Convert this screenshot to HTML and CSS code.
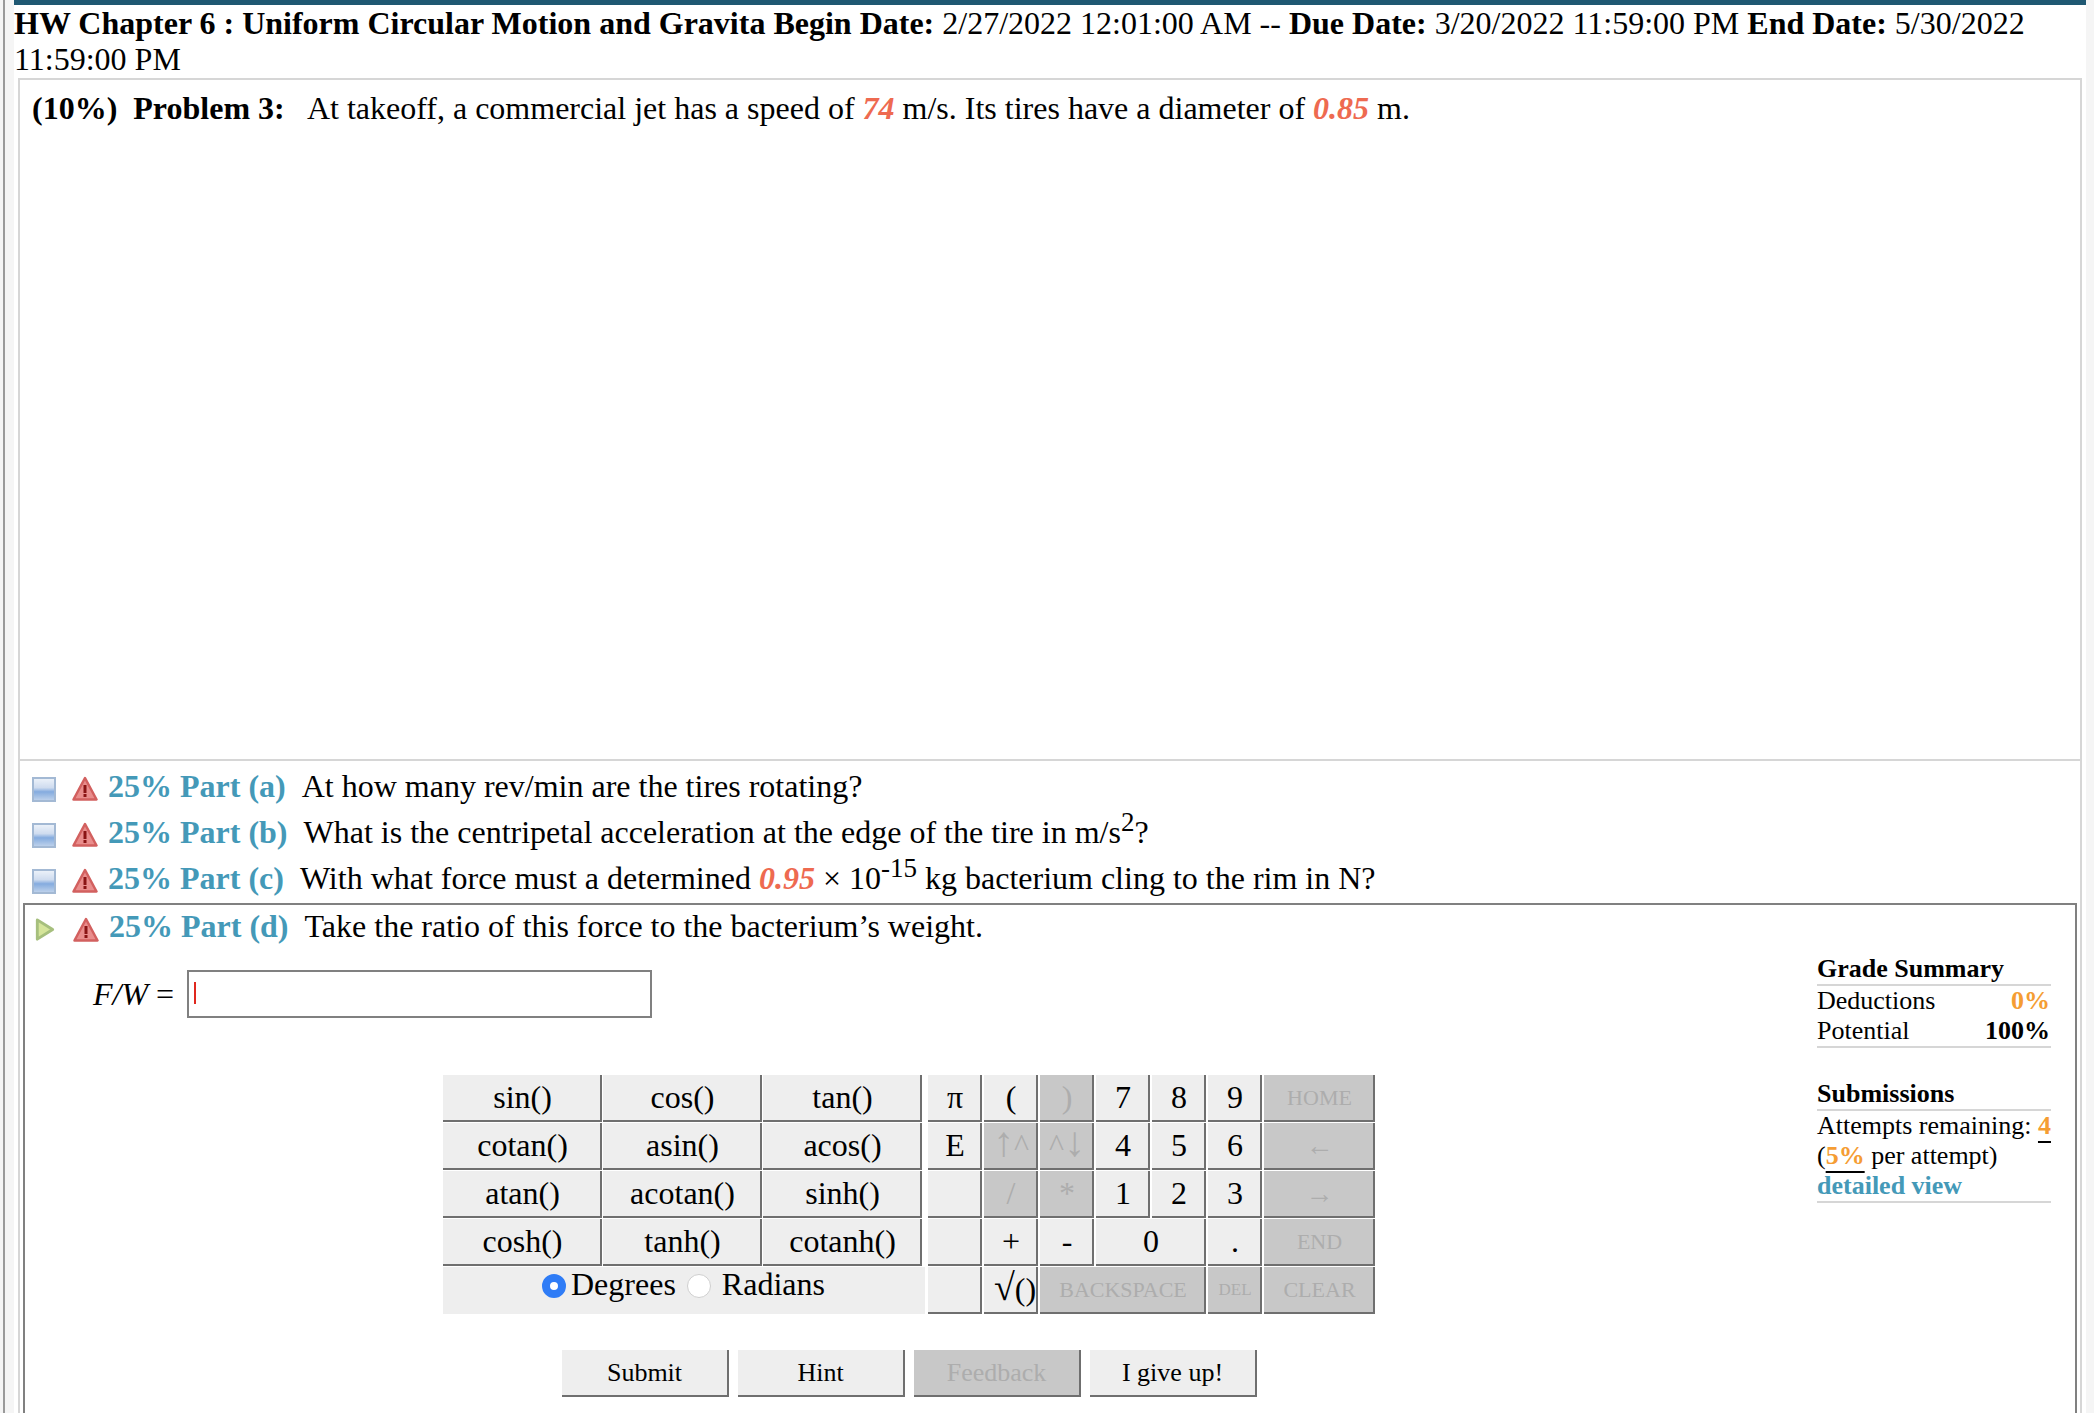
FILE: index.html
```html
<!DOCTYPE html>
<html lang="en">
<head>
  <meta charset="UTF-8" />
  <meta name="viewport" content="width=device-width, initial-scale=1.0" />
  <title>HW Chapter 6</title>
  <link rel="stylesheet" href="styles.css">
</head>
<body>
  <svg class="icon-defs" width="0" height="0">
    <defs>
      <linearGradient id="minus-fill" x1="0" y1="0" x2="0" y2="1">
        <stop offset="0" stop-color="#eef3fa"/>
        <stop offset="0.42" stop-color="#cfdcef"/>
        <stop offset="0.6" stop-color="#84abdf"/>
        <stop offset="1" stop-color="#c3d5ec"/>
      </linearGradient>
    </defs>
    <symbol id="icon-warn" viewBox="0 0 26 26">
      <path d="M13 2 L24.5 23.5 H1.5 Z" fill="#e98d8c" stroke="#d2605f" stroke-width="2.5" stroke-linejoin="round"/>
      <rect x="11.5" y="9" width="3" height="8" fill="#8a1414"/>
      <rect x="11.5" y="18" width="3" height="3" fill="#8a1414"/>
    </symbol>
    <symbol id="icon-minus" viewBox="0 0 24 25">
      <rect x="1" y="1" width="22" height="23" fill="url(#minus-fill)" stroke="#a3b9d4" stroke-width="2"/>
    </symbol>
    <symbol id="icon-play" viewBox="0 0 22 26">
      <path d="M3 3 L19 13 L3 23 Z" fill="#d5e59a" stroke="#a6bf7d" stroke-width="3" stroke-linejoin="round"/>
    </symbol>
  </svg>

  <div class="page">
    <div class="content">
      <header class="hw-title">
        <b>HW Chapter 6 : Uniform Circular Motion and Gravita</b> <b>Begin Date:</b> 2/27/2022 12:01:00 AM -- <b>Due Date:</b> 3/20/2022 11:59:00 PM <b>End Date:</b> 5/30/2022<br>11:59:00 PM
      </header>

      <div class="outer">
        <section class="problem">
          <b>(10%)&nbsp; Problem 3:</b>&nbsp;&nbsp; At takeoff, a commercial jet has a speed of <i class="given">74</i> m/s. Its tires have a diameter of <i class="given">0.85</i> m.
        </section>

        <div class="part-row">
          <svg class="icon"><use href="#icon-minus"/></svg>
          <svg class="icon warn"><use href="#icon-warn"/></svg>
          <b class="part-label">25% Part (a)</b>
          <span>At how many rev/min are the tires rotating?</span>
        </div>
        <div class="part-row">
          <svg class="icon"><use href="#icon-minus"/></svg>
          <svg class="icon warn"><use href="#icon-warn"/></svg>
          <b class="part-label">25% Part (b)</b>
          <span>What is the centripetal acceleration at the edge of the tire in m/s<sup>2</sup>?</span>
        </div>
        <div class="part-row">
          <svg class="icon"><use href="#icon-minus"/></svg>
          <svg class="icon warn"><use href="#icon-warn"/></svg>
          <b class="part-label">25% Part (c)</b>
          <span>With what force must a determined <i class="given">0.95</i> &times; 10<sup>-15</sup> kg bacterium cling to the rim in N?</span>
        </div>

        <section class="part-open">
          <div class="part-row">
            <svg class="icon play"><use href="#icon-play"/></svg>
            <svg class="icon warn"><use href="#icon-warn"/></svg>
            <b class="part-label">25% Part (d)</b>
            <span>Take the ratio of this force to the bacterium&rsquo;s weight.</span>
          </div>

          <div class="answer-area">
            <div class="answer-main">
              <div class="answer-line">
                <span class="answer-name"><i>F/W</i> =</span>
                <div class="answer-box"><span class="caret"></span></div>
              </div>

              <div class="keypad">
                <div class="keys-left">
                  <button class="key">sin()</button>
                  <button class="key">cos()</button>
                  <button class="key">tan()</button>
                  <button class="key">cotan()</button>
                  <button class="key">asin()</button>
                  <button class="key">acos()</button>
                  <button class="key">atan()</button>
                  <button class="key">acotan()</button>
                  <button class="key">sinh()</button>
                  <button class="key">cosh()</button>
                  <button class="key">tanh()</button>
                  <button class="key">cotanh()</button>
                  <div class="angle-mode">
                    <input type="radio" name="mode" checked> <label>Degrees</label>
                    <input type="radio" name="mode"> <label class="rad">Radians</label>
                  </div>
                </div>
                <div class="keys-right">
                  <button class="key">&pi;</button>
                  <button class="key">(</button>
                  <button class="key off">)</button>
                  <button class="key">7</button>
                  <button class="key">8</button>
                  <button class="key">9</button>
                  <button class="key off small">HOME</button>
                  <button class="key">E</button>
                  <button class="key off"><span class="tall">&uarr;</span>^</button>
                  <button class="key off">^<span class="tall">&darr;</span></button>
                  <button class="key">4</button>
                  <button class="key">5</button>
                  <button class="key">6</button>
                  <button class="key off arrow">&larr;</button>
                  <button class="key"></button>
                  <button class="key off">/</button>
                  <button class="key off">*</button>
                  <button class="key">1</button>
                  <button class="key">2</button>
                  <button class="key">3</button>
                  <button class="key off arrow">&rarr;</button>
                  <button class="key"></button>
                  <button class="key">+</button>
                  <button class="key">-</button>
                  <button class="key wide-2">0</button>
                  <button class="key">.</button>
                  <button class="key off small">END</button>
                  <button class="key"></button>
                  <button class="key root-key"><span class="root">&radic;</span>()</button>
                  <button class="key off small wide-3">BACKSPACE</button>
                  <button class="key off tiny">DEL</button>
                  <button class="key off small">CLEAR</button>
                </div>
              </div>

              <div class="actions">
                <button class="action">Submit</button>
                <button class="action">Hint</button>
                <button class="action off">Feedback</button>
                <button class="action">I give up!</button>
              </div>
            </div>

            <aside class="summary">
              <h4>Grade Summary</h4>
              <div class="summary-list">
                <div class="summary-row"><span>Deductions</span><b class="orange">0%</b></div>
                <div class="summary-row"><span>Potential</span><b>100%</b></div>
              </div>
              <h4 class="second">Submissions</h4>
              <div class="summary-list">
                Attempts remaining: <b class="orange count">4</b><br>
                (<b class="orange count">5%</b> per attempt)<br>
                <a class="detail-link" href="#">detailed view</a>
              </div>
            </aside>
          </div>
        </section>
      </div>
    </div>
  </div>
</body>
</html>
```

FILE: styles.css
```css
:root {
  --teal: #4499b8;
  --given: #ee6a50;
  --orange: #f59d33;
  --key-bg: #eeeeee;
  --key-off: #c8c8c8;
  --key-edge: #6f6f6f;
  --rule: #d6d6d6;
}

* {
  box-sizing: border-box;
}

html, body {
  margin: 0;
  height: 100%;
  overflow: hidden;
}

body {
  background: #f5f5f5;
  color: #000;
  font-family: "Liberation Serif", "Times New Roman", serif;
  font-size: 32px;
}

.icon-defs {
  position: absolute;
}

.page {
  height: 1413px;
  margin-left: 3px;
  padding: 0 8px 0 9px;
  border-left: 2px solid #9a9a9a;
  overflow: hidden;
}

.content {
  height: 100%;
  background: #fff;
  padding-right: 4px;
}

.hw-title {
  border-top: 5px solid #1f5872;
  margin-right: -4px;
  line-height: 36px;
}

.outer {
  margin: 1px 0 0 4px;
  height: 1340px;
  border: solid var(--rule);
  border-width: 2px 2px 0;
}

.problem {
  height: 681px;
  border-bottom: 2px solid var(--rule);
  padding: 10px 12px;
  line-height: 36px;
}

.given {
  color: var(--given);
  font-weight: bold;
}

.part-row {
  display: flex;
  align-items: center;
  height: 46px;
  padding-left: 12px;
  white-space: pre;
}

.problem + .part-row {
  margin-top: 2px;
}

.icon {
  width: 24px;
  height: 25px;
  margin-top: 6px;
  flex: none;
  filter: blur(0.6px);
}

.icon.warn {
  width: 26px;
  height: 26px;
  margin-left: 16px;
  margin-right: 10px;
}

.part-label {
  color: var(--teal);
  margin-right: 16px;
}

sup {
  line-height: 0;
  font-size: 27px;
}

.part-open {
  margin: 2px 3px 0;
  height: 600px;
  border: 2px solid #808080;
}

.part-open .part-row {
  height: 43px;
  padding-left: 8px;
}

.answer-area {
  display: flex;
  justify-content: space-between;
}

.answer-main {
  padding-top: 22px;
}

.answer-line {
  display: flex;
  align-items: center;
  gap: 13px;
  padding-left: 68px;
}

.answer-box {
  width: 465px;
  height: 48px;
  border: 2px solid #808080;
  padding: 10px 5px;
}

.caret {
  display: block;
  width: 2px;
  height: 22px;
  background: #e0281e;
}

.keypad {
  display: flex;
  gap: 6px;
  margin: 57px 0 0 418px;
}

.keys-left {
  display: grid;
  grid-template-columns: repeat(3, 159px);
  grid-auto-rows: 47px;
  gap: 1px;
}

.keys-right {
  display: grid;
  grid-template-columns: repeat(6, 54px) 111px;
  grid-auto-rows: 47px;
  column-gap: 2px;
  row-gap: 1px;
}

.key {
  margin: 0;
  padding: 0 0 0 2px;
  font-family: inherit;
  font-size: 32px;
  color: #000;
  background: var(--key-bg);
  border: none;
  border-right: 2px solid var(--key-edge);
  border-bottom: 2px solid var(--key-edge);
  white-space: nowrap;
}

.key.off {
  background: var(--key-off);
  color: #adadad;
}

.key.small {
  font-size: 22px;
}

.key.tiny {
  font-size: 17px;
}

.key.arrow {
  font-size: 28px;
}

.key.root-key {
  padding-left: 10px;
}

.tall {
  font-size: 42px;
  line-height: 0;
}

.root {
  font-size: 38px;
  line-height: 0;
}

.wide-2 {
  grid-column: span 2;
}

.wide-3 {
  grid-column: span 3;
}

.angle-mode {
  grid-column: span 3;
  display: flex;
  align-items: flex-start;
  background: var(--key-bg);
  font-size: 32px;
  line-height: 34px;
  margin-right: -3px;
  padding-left: 99px;
}

.angle-mode input {
  appearance: none;
  width: 24px;
  height: 24px;
  margin: 7px 5px 0 0;
  border-radius: 50%;
  background: #fff;
  border: 1px solid #cfcfcf;
}

.angle-mode input:checked {
  border: 8px solid #2f7cf6;
}

.angle-mode label + input {
  margin-left: 11px;
}

.angle-mode .rad {
  margin-left: 6px;
}

.actions {
  display: flex;
  gap: 9px;
  margin: 36px 0 0 537px;
}

.action {
  width: 167px;
  height: 47px;
  padding: 0;
  font-family: inherit;
  font-size: 26px;
  color: #000;
  background: var(--key-bg);
  border: none;
  border-right: 2px solid var(--key-edge);
  border-bottom: 2px solid var(--key-edge);
}

.action.off {
  background: var(--key-off);
  color: #adadad;
}

.summary {
  width: 234px;
  margin: 6px 24px 0 0;
  font-size: 26px;
  line-height: 30px;
}

.summary h4 {
  margin: 0;
  font-size: 26px;
  border-bottom: 2px solid var(--rule);
  line-height: 30px;
}

.summary h4.second {
  margin-top: 31px;
}

.summary-list {
  border-bottom: 2px solid var(--rule);
}

.summary-row {
  display: flex;
  justify-content: space-between;
  padding-right: 1px;
}

.orange {
  color: var(--orange);
}

.count {
  text-decoration: underline;
  text-decoration-color: #000;
  text-decoration-thickness: 2px;
  text-underline-offset: 7px;
}

.detail-link {
  color: var(--teal);
  font-weight: bold;
  text-decoration: none;
}
```
